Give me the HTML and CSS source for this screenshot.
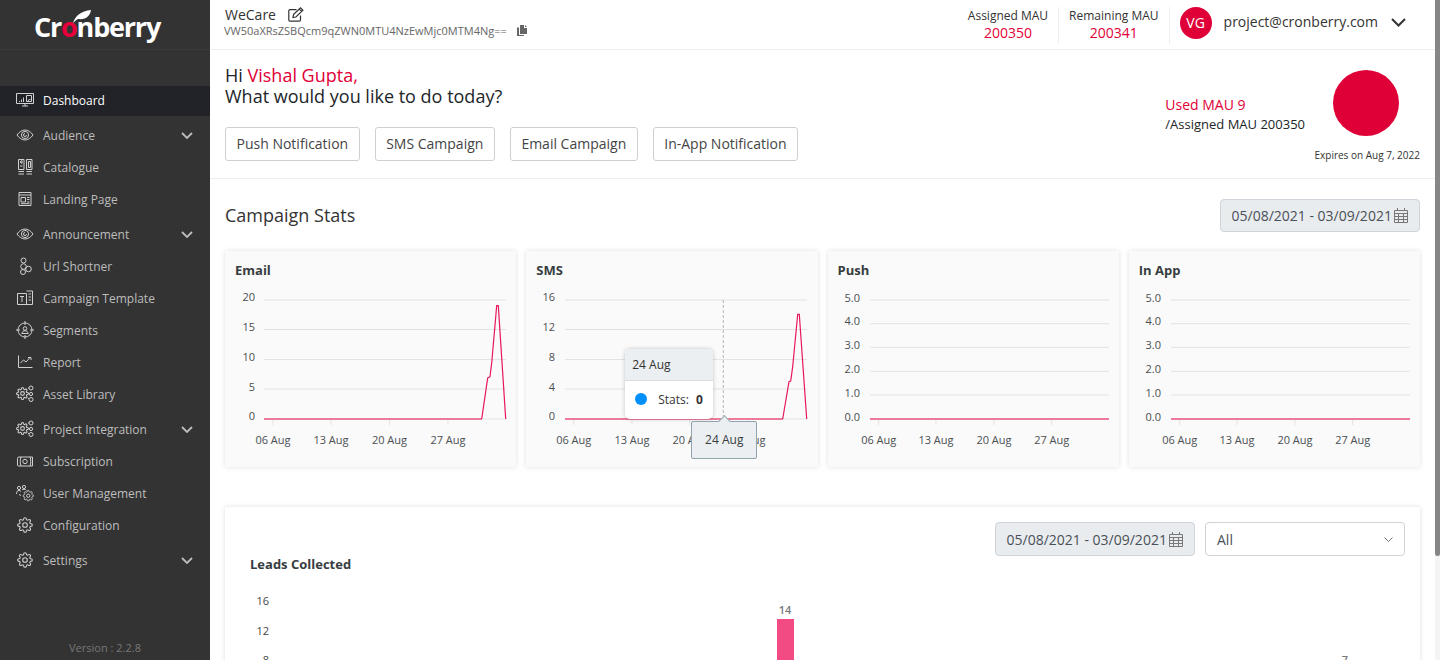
FILE: index.html
```html
<!DOCTYPE html>
<html lang="en">
<head>
    <meta charset="UTF-8">
    <meta name="viewport" content="width=device-width, initial-scale=1.0">
    <title>Cronberry Dashboard</title>
    <link rel="stylesheet" href="styles.css">
</head>
<body>

    <!-- Shared icon shapes -->
    <svg class="icon-defs" width="0" height="0">
        <defs>
            <symbol id="i-gear" viewBox="0 0 24 24">
                <circle cx="12" cy="12" r="3.5"/>
                <path d="M19.4 15a1.65 1.65 0 0 0 .33 1.82l.06.06a2 2 0 0 1 0 2.83 2 2 0 0 1-2.83 0l-.06-.06a1.65 1.65 0 0 0-1.82-.33 1.65 1.65 0 0 0-1 1.51V21a2 2 0 0 1-2 2 2 2 0 0 1-2-2v-.09A1.65 1.65 0 0 0 9 19.4a1.65 1.65 0 0 0-1.82.33l-.06.06a2 2 0 0 1-2.83 0 2 2 0 0 1 0-2.83l.06-.06a1.65 1.65 0 0 0 .33-1.82 1.65 1.65 0 0 0-1.51-1H3a2 2 0 0 1-2-2 2 2 0 0 1 2-2h.09A1.65 1.65 0 0 0 4.6 9a1.65 1.65 0 0 0-.33-1.82l-.06-.06a2 2 0 0 1 0-2.83 2 2 0 0 1 2.83 0l.06.06a1.65 1.65 0 0 0 1.82.33H9a1.65 1.65 0 0 0 1-1.51V3a2 2 0 0 1 2-2 2 2 0 0 1 2 2v.09a1.65 1.65 0 0 0 1 1.51 1.65 1.65 0 0 0 1.82-.33l.06-.06a2 2 0 0 1 2.83 0 2 2 0 0 1 0 2.83l-.06.06a1.65 1.65 0 0 0-.33 1.82V9a1.65 1.65 0 0 0 1.51 1H21a2 2 0 0 1 2 2 2 2 0 0 1-2 2h-.09a1.65 1.65 0 0 0-1.51 1z"/>
            </symbol>
            <symbol id="i-gear-links" viewBox="0 0 18 18">
                <svg x="0" y="2" width="13" height="13" viewBox="0 0 24 24" stroke-width="2">
                    <circle cx="12" cy="12" r="3.5"/>
                    <path d="M19.4 15a1.65 1.65 0 0 0 .33 1.82 2 2 0 0 1-2.83 2.83 1.65 1.65 0 0 0-2.82 1.18V21a2 2 0 0 1-4 0 1.65 1.65 0 0 0-2.9-1.27 2 2 0 0 1-2.83-2.83A1.65 1.65 0 0 0 3 14a2 2 0 0 1 0-4 1.65 1.65 0 0 0 1.27-2.82 2 2 0 0 1 2.83-2.83A1.65 1.65 0 0 0 10 3a2 2 0 0 1 4 0 1.65 1.65 0 0 0 2.82 1.27 2 2 0 0 1 2.83 2.83A1.65 1.65 0 0 0 21 10a2 2 0 0 1 0 4 1.65 1.65 0 0 0-1.6 1z"/>
                </svg>
                <circle cx="15" cy="3" r="2"/>
                <circle cx="15" cy="9" r="1.6"/>
                <circle cx="15" cy="14.5" r="2"/>
                <path d="M12 3h1M13 9h.5M12 13l1 .8"/>
            </symbol>
            <symbol id="i-eye" viewBox="0 0 18 12">
                <path d="M1 6c2-3 5-5 8-5s6 2 8 5c-2 3-5 5-8 5s-6-2-8-5z"/>
                <circle cx="9" cy="6" r="3.6"/>
                <path d="M9 4.5a1.5 1.5 0 1 0 1.5 1.5"/>
            </symbol>
            <symbol id="i-calendar" viewBox="0 0 14 15">
                <path d="M.5 2.5h13v12H.5zM.5 5.5h13M.5 8.5h13M.5 11.5h13M4.5 5.5v9M9.5 5.5v9M3.5 0v2.5M10.5 0v2.5"/>
            </symbol>
        </defs>
    </svg>

    <aside class="sidebar">
        <div class="logo">
            <span class="logo-text">Cr<span class="logo-o">o</span>nberry</span>
            <svg class="logo-leaf" width="18" height="13" viewBox="0 0 18 13"><path d="M0 13C2 6 8 1 18 0c-1 6-5 10-13 9-2 1-3 2-5 4z" fill="#fff"/></svg>
        </div>

        <nav class="menu">
            <a class="menu-item active">
                <svg class="menu-icon" viewBox="0 0 18 14"><path d="M.5.5h17v10H.5zM6 13h6M9 10.500V13"/><path class="solid" d="M3 8h1v1H3zM5 6.500h1V9H5zM7 4.500h1V9H7z"/><path d="M10.500 2.500h5v6h-5zM12 8l1.500-2 1 1"/></svg>
                Dashboard
            </a>
            <a class="menu-item group">
                <svg class="menu-icon" viewBox="0 0 18 12"><use href="#i-eye"/></svg>
                Audience
                <svg class="menu-chevron" viewBox="0 0 12 7"><path d="M1 1l5 5 5-5"/></svg>
            </a>
            <a class="menu-item">
                <svg class="menu-icon" viewBox="0 0 18 18"><path d="M2.500 1.500h5.500v10H2.500zM10.500 1.500h5.500v10h-5.500zM12.500 3.500h2v6h-2zM4 4l2-1.500v3zM4 8h2.500M2.500 13.500h5.500M10.500 13.500h5.500M2.500 16h5.500M10.500 16h5.500"/></svg>
                Catalogue
            </a>
            <a class="menu-item">
                <svg class="menu-icon" viewBox="0 0 18 18"><path d="M3 2.500h12v13H3zM3 5h12M5 7.500h4.500v4.500H5zM11 7.500h2.500M11 9.500h2.500M11 12h2.500M5 13.700h8.500"/></svg>
                Landing Page
            </a>
            <a class="menu-item group">
                <svg class="menu-icon" viewBox="0 0 18 12"><use href="#i-eye"/></svg>
                Announcement
                <svg class="menu-chevron" viewBox="0 0 12 7"><path d="M1 1l5 5 5-5"/></svg>
            </a>
            <a class="menu-item">
                <svg class="menu-icon" viewBox="0 0 18 18"><circle cx="7.500" cy="3.500" r="2.500"/><circle cx="7.500" cy="9.500" r="2.800"/><circle cx="7" cy="15" r="2.500"/><circle cx="12.500" cy="12" r="2.800"/></svg>
                Url Shortner
            </a>
            <a class="menu-item">
                <svg class="menu-icon" viewBox="0 0 18 18"><path d="M1.500 4.500h9v11h-9zM10.500 2h6v13.500h-6M4 7.500h4M6 7.500V13M12.500 5h2.500M12.500 8h2.500M12.500 11h2.500"/></svg>
                Campaign Template
            </a>
            <a class="menu-item">
                <svg class="menu-icon" viewBox="0 0 18 18"><circle cx="9" cy="9" r="7"/><path d="M9 0v4M9 14v4M0 9h4M14 9h4"/><circle cx="9" cy="7.500" r="1.800"/><path d="M5.800 12.500c.5-2 1.700-2.800 3.200-2.800s2.700.8 3.200 2.800z"/></svg>
                Segments
            </a>
            <a class="menu-item">
                <svg class="menu-icon" viewBox="0 0 18 18"><path d="M2.500 2.500v12h14M4.500 10l3-3 2.500 2 4-4.500M12 4.500h3V7"/></svg>
                Report
            </a>
            <a class="menu-item">
                <svg class="menu-icon"><use href="#i-gear-links"/></svg>
                Asset Library
            </a>
            <a class="menu-item group">
                <svg class="menu-icon"><use href="#i-gear-links"/></svg>
                Project Integration
                <svg class="menu-chevron" viewBox="0 0 12 7"><path d="M1 1l5 5 5-5"/></svg>
            </a>
            <a class="menu-item">
                <svg class="menu-icon" viewBox="0 0 18 18"><path d="M3 5h13.500v9H2.500a1 1 0 0 1-1-1V6.500A1.500 1.500 0 0 1 3 5zM5 14c-1-2-1-7 0-9M14 5c1 2 1 7 0 9"/><circle cx="9" cy="9.500" r="2.200"/></svg>
                Subscription
            </a>
            <a class="menu-item">
                <svg class="menu-icon" viewBox="0 0 18 18"><circle cx="3" cy="4" r="1.600"/><circle cx="8" cy="3" r="1.600"/><path d="M.5 10c0-2.500 1-3.500 2.500-3.500 1 0 1.500.5 2 1M6 6c.5-.5 1-.8 2-.8 1 0 2 .5 2.500 1.300M3 10.500l2 1"/><svg x="6.500" y="6" width="11.500" height="11.500" viewBox="0 0 24 24" stroke-width="2"><use href="#i-gear" width="24" height="24"/></svg></svg>
                User Management
            </a>
            <a class="menu-item">
                <svg class="menu-icon gear" viewBox="0 0 24 24"><use href="#i-gear"/></svg>
                Configuration
            </a>
            <a class="menu-item group">
                <svg class="menu-icon gear" viewBox="0 0 24 24"><use href="#i-gear"/></svg>
                Settings
                <svg class="menu-chevron" viewBox="0 0 12 7"><path d="M1 1l5 5 5-5"/></svg>
            </a>
        </nav>

        <div class="version">Version : 2.2.8</div>
    </aside>

    <main class="main">
        <header class="top-bar">
            <div class="project">
                <div class="project-name">
                    WeCare
                    <svg class="edit-icon" width="16" height="15" viewBox="0 0 16 15"><path d="M12.500 8.500V13a1.200 1.200 0 0 1-1.200 1.200H2A1.200 1.200 0 0 1 .8 13V3.800A1.200 1.200 0 0 1 2 2.600h6.500"/><path d="M5.500 7.500L12.500.9l2.400 2.400-7 6.700-2.900.5zM11.300 2.100l2.400 2.400"/></svg>
                </div>
                <div class="project-key">
                    VW50aXRsZSBQcm9qZWN0MTU4NzEwMjc0MTM4Ng==
                    <svg class="copy-icon" width="10" height="11" viewBox="0 0 10 11"><path d="M3 0h4v3h3v6H3zM8 0l2 2H8zM0 2.500h2V10h5v1H0z"/></svg>
                </div>
            </div>
            <div class="account">
                <div class="mau-stat">
                    <div class="mau-label">Assigned MAU</div>
                    <div class="mau-value">200350</div>
                </div>
                <div class="mau-stat">
                    <div class="mau-label">Remaining MAU</div>
                    <div class="mau-value">200341</div>
                </div>
                <div class="avatar">VG</div>
                <div class="account-email">project@cronberry.com</div>
                <svg class="account-chevron" width="15" height="9" viewBox="0 0 15 9"><path d="M1 1l6.500 6.500L14 1"/></svg>
            </div>
        </header>

        <section class="welcome">
            <div>
                <div class="greeting">Hi <span class="accent">Vishal Gupta,</span><br>What would you like to do today?</div>
                <div class="quick-actions">
                    <button class="quick-btn">Push Notification</button>
                    <button class="quick-btn">SMS Campaign</button>
                    <button class="quick-btn">Email Campaign</button>
                    <button class="quick-btn">In-App Notification</button>
                </div>
            </div>
            <div class="usage">
                <div class="usage-top">
                    <div class="usage-text">
                        <div class="accent">Used MAU 9</div>
                        <div class="usage-assigned">/Assigned MAU 200350</div>
                    </div>
                    <div class="usage-circle"></div>
                </div>
                <div class="usage-expiry">Expires on Aug 7, 2022</div>
            </div>
        </section>

        <section class="stats-head">
            <h2 class="stats-title">Campaign Stats</h2>
            <div class="date-box">
                05/08/2021 - 03/09/2021
                <svg class="calendar" width="14" height="15"><use href="#i-calendar"/></svg>
            </div>
        </section>

        <section class="stat-cards">
            <div class="stat-card">
                <div class="stat-title">Email</div>
                <svg class="chart" width="291" height="175">
                    <path class="grid" d="M39 14h242M39 43.500h242M39 73.500h242M39 103h242M39 133h242"/>
                    <path class="tick" d="M48 133v6M106 133v6M164.500 133v6M223 133v6"/>
                    <g class="y-labels">
                        <text x="30" y="15">20</text><text x="30" y="45">15</text><text x="30" y="75">10</text><text x="30" y="105">5</text><text x="30" y="134">0</text>
                    </g>
                    <g class="x-labels">
                        <text x="48" y="158">06 Aug</text><text x="106" y="158">13 Aug</text><text x="164.500" y="158">20 Aug</text><text x="223" y="158">27 Aug</text>
                    </g>
                    <path class="flat" d="M39 133h218"/>
                    <path class="series" d="M256.700 133L262.700 92 265 90.700 266.700 77 271.700 19.700h1.600L280.700 133"/>
                </svg>
            </div>

            <div class="stat-card">
                <div class="stat-title">SMS</div>
                <svg class="chart" width="291" height="175">
                    <path class="grid" d="M39 14h242M39 43.500h242M39 73.500h242M39 103h242M39 133h242"/>
                    <path class="tick" d="M47.700 133v6M106 133v6M164 133v6M222 133v6"/>
                    <g class="y-labels">
                        <text x="29" y="15">16</text><text x="29" y="45">12</text><text x="29" y="75">8</text><text x="29" y="105">4</text><text x="29" y="134">0</text>
                    </g>
                    <g class="x-labels">
                        <text x="47.700" y="158">06 Aug</text><text x="106" y="158">13 Aug</text><text x="164" y="158">20 Aug</text><text x="222" y="158">27 Aug</text>
                    </g>
                    <path class="crosshair" d="M197.300 14v119"/>
                    <path class="flat" d="M39 133h218"/>
                    <path class="series" d="M256.700 133L263 95.700 264.700 95 266.700 80.700 271.700 28.300h1.600L280.700 133"/>
                </svg>
                <div class="chart-tooltip">
                    <div class="tooltip-title">24 Aug</div>
                    <div class="tooltip-body">
                        <span class="tooltip-dot"></span>
                        <span>Stats:</span>
                        <b>0</b>
                    </div>
                </div>
                <div class="axis-tooltip">24 Aug</div>
            </div>

            <div class="stat-card">
                <div class="stat-title">Push</div>
                <svg class="chart" width="291" height="175">
                    <path class="grid" d="M42 14h239M42 37.700h239M42 61.300h239M42 85.300h239M42 109h239M42 133h239"/>
                    <path class="tick" d="M50.700 133v6M108 133v6M166 133v6M223.700 133v6"/>
                    <g class="y-labels">
                        <text x="32" y="16">5.0</text><text x="32" y="39">4.0</text><text x="32" y="63">3.0</text><text x="32" y="87">2.0</text><text x="32" y="111">1.0</text><text x="32" y="135">0.0</text>
                    </g>
                    <g class="x-labels">
                        <text x="50.700" y="158">06 Aug</text><text x="108" y="158">13 Aug</text><text x="166" y="158">20 Aug</text><text x="223.700" y="158">27 Aug</text>
                    </g>
                    <path class="flat" d="M42 133h239"/>
                </svg>
            </div>

            <div class="stat-card">
                <div class="stat-title">In App</div>
                <svg class="chart" width="291" height="175">
                    <path class="grid" d="M42 14h239M42 37.700h239M42 61.300h239M42 85.300h239M42 109h239M42 133h239"/>
                    <path class="tick" d="M50.700 133v6M108 133v6M166 133v6M223.700 133v6"/>
                    <g class="y-labels">
                        <text x="32" y="16">5.0</text><text x="32" y="39">4.0</text><text x="32" y="63">3.0</text><text x="32" y="87">2.0</text><text x="32" y="111">1.0</text><text x="32" y="135">0.0</text>
                    </g>
                    <g class="x-labels">
                        <text x="50.700" y="158">06 Aug</text><text x="108" y="158">13 Aug</text><text x="166" y="158">20 Aug</text><text x="223.700" y="158">27 Aug</text>
                    </g>
                    <path class="flat" d="M42 133h239"/>
                </svg>
            </div>
        </section>

        <section class="leads-card">
            <div class="leads-filters">
                <div class="date-box">
                    05/08/2021 - 03/09/2021
                    <svg class="calendar" width="14" height="15"><use href="#i-calendar"/></svg>
                </div>
                <div class="select-box">
                    All
                    <svg width="9" height="5" viewBox="0 0 9 5"><path d="M.5.5l4 4 4-4"/></svg>
                </div>
            </div>
            <div class="leads-title">Leads Collected</div>
            <svg class="leads-chart" width="1195" height="120">
                <g class="leads-axis">
                    <text x="44" y="25">16</text><text x="44" y="55">12</text><text x="44" y="84">8</text>
                </g>
                <text class="bar-label" x="560" y="34">14</text>
                <rect class="bar" x="552" y="39" width="17" height="81"/>
                <text class="bar-label" x="1120" y="84">7</text>
            </svg>
        </section>
    </main>

    <div class="scrollbar"><div class="scrollbar-thumb"></div></div>

</body>
</html>
```

FILE: styles.css
```css
* {
    box-sizing: border-box;
}

html, body {
    height: 660px;
    overflow: hidden;
}

body {
    margin: 0;
    display: flex;
    font-family: "Open Sans", Arial, sans-serif;
    color: #212529;
    background-color: white;
}

.icon-defs {
    position: absolute;
}

.accent {
    color: #df0037;
}

/* Sidebar */
.sidebar {
    flex: 0 0 210px;
    height: 660px;
    background-color: #333333;
    display: flex;
    flex-direction: column;
}

.logo {
    position: relative;
    height: 50px;
    padding-left: 34px;
    border-bottom: 1px solid #3a3a3a;
}

.logo-text {
    display: block;
    font-size: 27px;
    font-weight: 700;
    line-height: 53px;
    letter-spacing: -1.200px;
    color: white;
}

.logo-o {
    color: #e8003a;
}

.logo-leaf {
    position: absolute;
    top: 10px;
    left: 73px;
}

.menu {
    margin-top: 36px;
}

.menu-item {
    display: flex;
    align-items: center;
    height: 32px;
    padding-left: 16px;
    font-size: 12px;
    color: #bdbdbd;
}

.menu-item.group {
    margin-top: 3px;
}

.menu-item.active {
    height: 30px;
    padding-bottom: 2px;
    background-color: #212328;
    color: white;
}

.menu-icon {
    flex: 0 0 18px;
    width: 18px;
    height: 18px;
    margin-right: 9px;
    fill: none;
    stroke: #d0d0d0;
    stroke-width: 1;
}

.menu-icon.gear {
    width: 16px;
    flex-basis: 16px;
    margin-left: 1px;
    margin-right: 10px;
    stroke-width: 1.600;
}

.menu-icon .solid {
    fill: #d0d0d0;
    stroke: none;
}

.menu-chevron {
    width: 12px;
    height: 7px;
    margin-left: auto;
    margin-right: 17px;
    fill: none;
    stroke: #bdbdbd;
    stroke-width: 1.800;
}

.version {
    margin-top: auto;
    height: 24px;
    line-height: 24px;
    text-align: center;
    font-size: 11px;
    color: #777777;
}

/* Main column */
.main {
    flex: 1;
    min-width: 0;
}

.top-bar {
    height: 50px;
    display: flex;
    justify-content: space-between;
    padding: 0 29px 0 15px;
    border-bottom: 1px solid #eeeeee;
}

.project {
    padding-top: 4px;
}

.project-name {
    display: flex;
    align-items: center;
    height: 20px;
    font-size: 14px;
    color: #333333;
}

.edit-icon {
    margin-left: 12px;
    fill: none;
    stroke: #333333;
    stroke-width: 1.200;
}

.project-key {
    display: flex;
    align-items: center;
    margin-left: -1px;
    font-size: 11px;
    line-height: 14px;
    color: #666666;
}

.copy-icon {
    margin-left: 10px;
    margin-top: -1px;
    fill: #666666;
}

.account {
    display: flex;
    align-items: flex-start;
    padding-top: 7px;
}

.mau-stat {
    height: 37px;
    padding: 0 10px;
    border-right: 1px solid #eeeeee;
    text-align: center;
}

.mau-label {
    font-size: 12px;
    line-height: 17px;
    color: #333333;
}

.mau-value {
    font-size: 14px;
    line-height: 18px;
    color: #df0037;
}

.avatar {
    width: 32px;
    height: 32px;
    margin-left: 10px;
    border-radius: 50%;
    background-color: #df0037;
    color: white;
    font-size: 14px;
    line-height: 32px;
    text-align: center;
}

.account-email {
    margin-left: 12px;
    font-size: 14px;
    line-height: 30px;
    color: #333333;
}

.account-chevron {
    margin-left: 13px;
    margin-top: 11px;
    fill: none;
    stroke: #333333;
    stroke-width: 2;
}

/* Welcome block */
.welcome {
    height: 129px;
    display: flex;
    justify-content: space-between;
    padding: 15px 15px 0;
    border-bottom: 1px solid #eeeeee;
}

.greeting {
    font-size: 18px;
    line-height: 21.400px;
}

.quick-actions {
    display: flex;
    gap: 15px;
    margin-top: 19.200px;
}

.quick-btn {
    height: 34px;
    padding: 0 10.500px 2px;
    border: 1px solid #ccd0d4;
    border-radius: 3px;
    background-color: white;
    font-family: inherit;
    font-size: 14px;
    color: #444444;
}

.usage {
    display: flex;
    flex-direction: column;
    align-items: flex-end;
    padding-top: 5px;
}

.usage-top {
    display: flex;
}

.usage-text {
    margin-top: 25px;
    margin-right: 28px;
    font-size: 14px;
    line-height: 19px;
}

.usage-assigned {
    margin-top: 1px;
    font-size: 13px;
}

.usage-circle {
    width: 66px;
    height: 66px;
    margin-right: 21px;
    border-radius: 50%;
    background-color: #df0037;
}

.usage-expiry {
    margin-top: 12px;
    font-size: 10px;
    line-height: 14px;
    color: #333333;
}

/* Campaign stats */
.stats-head {
    display: flex;
    justify-content: space-between;
    align-items: center;
    padding: 20px 15px 19px;
}

.stats-title {
    margin: 0 0 2px;
    font-size: 18px;
    font-weight: 400;
    color: #333333;
}

.date-box {
    display: flex;
    align-items: center;
    justify-content: space-between;
    width: 200px;
    height: 33px;
    padding: 0 11px 0 10.500px;
    border: 1px solid #ced4da;
    border-radius: 4px;
    background-color: #e9ecef;
    font-size: 14px;
    color: #495057;
}

.calendar {
    flex: none;
    fill: none;
    stroke: #777777;
    stroke-width: 1;
}

.stat-cards {
    display: grid;
    grid-template-columns: repeat(4, 1fr);
    gap: 10px;
    padding: 0 15px;
}

.stat-card {
    position: relative;
    height: 216px;
    padding-top: 10px;
    background-color: #fafafa;
    box-shadow: 0 0 5px rgba(0, 0, 0, 0.13);
}

.stat-title {
    padding-left: 10px;
    font-size: 13px;
    font-weight: 700;
    line-height: 18px;
    color: #373d3f;
}

.chart {
    display: block;
    margin-top: 7px;
    overflow: visible;
}

.chart text {
    font-size: 11px;
    fill: #4a4f52;
}

.grid {
    fill: none;
    stroke: #e3e3e3;
    stroke-width: 1;
}

.tick {
    fill: none;
    stroke: #e3e3e3;
}

.y-labels text {
    text-anchor: end;
}

.x-labels text {
    text-anchor: middle;
}

.flat {
    fill: none;
    stroke: #ee7a9b;
    stroke-width: 2;
}

.series {
    fill: none;
    stroke: #e8175a;
    stroke-width: 1.200;
}

.crosshair {
    fill: none;
    stroke: #b6b6b6;
    stroke-dasharray: 3 2;
}

.chart-tooltip {
    position: absolute;
    top: 98px;
    left: 99px;
    width: 88px;
    height: 70px;
    border-radius: 5px;
    background-color: white;
    box-shadow: 0 0 4px rgba(0, 0, 0, 0.22);
    font-size: 12px;
    overflow: hidden;
}

.tooltip-title {
    height: 32px;
    padding-left: 7px;
    background-color: #eceff1;
    border-bottom: 1px solid #dddddd;
    line-height: 31px;
    color: #333333;
}

.tooltip-body {
    display: flex;
    align-items: center;
    height: 38px;
    padding: 0 0 2px 10px;
    color: #333333;
}

.tooltip-dot {
    width: 12px;
    height: 12px;
    margin-right: 11px;
    border-radius: 50%;
    background-color: #008ffb;
}

.tooltip-body b {
    margin-left: 7px;
}

.axis-tooltip {
    position: absolute;
    top: 170px;
    left: 165px;
    width: 66px;
    height: 38px;
    border: 1px solid #90a4ae;
    border-radius: 2px;
    background-color: #eceff1;
    font-size: 12px;
    line-height: 36px;
    text-align: center;
    color: #373d3f;
}

.axis-tooltip::before {
    content: "";
    position: absolute;
    top: -5px;
    left: 28px;
    width: 8px;
    height: 8px;
    background-color: #eceff1;
    border-top: 1px solid #90a4ae;
    border-left: 1px solid #90a4ae;
    transform: rotate(45deg);
}

/* Leads card */
.leads-card {
    margin: 40px 15px 0;
    height: 300px;
    padding-top: 15px;
    background-color: white;
    box-shadow: 0 0 5px rgba(0, 0, 0, 0.13);
}

.leads-filters {
    display: flex;
    justify-content: flex-end;
    gap: 10px;
    padding-right: 15px;
}

.leads-filters .date-box {
    height: 34px;
}

.select-box {
    display: flex;
    align-items: center;
    justify-content: space-between;
    width: 200px;
    height: 34px;
    padding: 0 11px;
    border: 1px solid #ced4da;
    border-radius: 4px;
    font-size: 14px;
    color: #495057;
}

.select-box svg {
    fill: none;
    stroke: #777777;
}

.leads-title {
    padding-left: 25px;
    font-size: 13px;
    font-weight: 700;
    line-height: 16px;
    color: #373d3f;
}

.leads-chart {
    display: block;
    margin-top: 8px;
}

.leads-axis text {
    font-size: 11px;
    fill: #444444;
    text-anchor: end;
}

.bar-label {
    font-size: 11px;
    font-weight: 600;
    fill: #777777;
    text-anchor: middle;
}

.bar {
    fill: #f24a82;
}

/* Page scrollbar */
.scrollbar {
    flex: 0 0 5px;
    background-color: #f4f4f4;
}

.scrollbar-thumb {
    height: 556px;
    background-color: #868686;
    border-radius: 0 0 3px 3px;
}
```
